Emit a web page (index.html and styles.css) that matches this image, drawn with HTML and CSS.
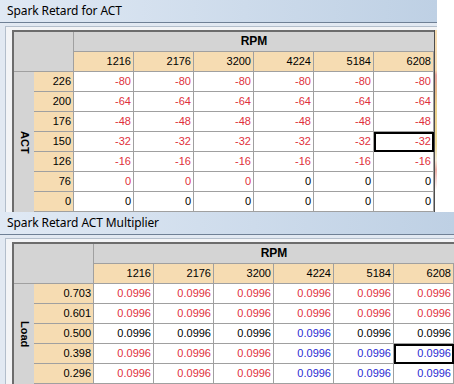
FILE: index.html
```html
<!DOCTYPE html>
<html>
<head>
<meta charset="utf-8">
<link rel="stylesheet" href="styles.css">
</head>
<body>
<div class="win win-top">
  <div class="titlebar">Spark Retard for ACT</div>
  <div class="frame">
    <div class="client">
      <div class="table table-act">
        <div class="corner"></div>
        <div class="axis-x">RPM</div>
        <div class="axis-y"><span>ACT</span></div>
        <div class="colhdr">1216</div><div class="colhdr">2176</div><div class="colhdr">3200</div><div class="colhdr">4224</div><div class="colhdr">5184</div><div class="colhdr">6208</div>
        <div class="rowhdr">226</div><div class="cell r">-80</div><div class="cell r">-80</div><div class="cell r">-80</div><div class="cell r">-80</div><div class="cell r">-80</div><div class="cell r">-80</div>
        <div class="rowhdr">200</div><div class="cell r">-64</div><div class="cell r">-64</div><div class="cell r">-64</div><div class="cell r">-64</div><div class="cell r">-64</div><div class="cell r">-64</div>
        <div class="rowhdr">176</div><div class="cell r">-48</div><div class="cell r">-48</div><div class="cell r">-48</div><div class="cell r">-48</div><div class="cell r">-48</div><div class="cell r">-48</div>
        <div class="rowhdr">150</div><div class="cell r">-32</div><div class="cell r">-32</div><div class="cell r">-32</div><div class="cell r">-32</div><div class="cell r">-32</div><div class="cell r sel">-32</div>
        <div class="rowhdr">126</div><div class="cell r">-16</div><div class="cell r">-16</div><div class="cell r">-16</div><div class="cell r">-16</div><div class="cell r">-16</div><div class="cell r">-16</div>
        <div class="rowhdr">76</div><div class="cell r">0</div><div class="cell r">0</div><div class="cell r">0</div><div class="cell k">0</div><div class="cell k">0</div><div class="cell k">0</div>
        <div class="rowhdr">0</div><div class="cell k">0</div><div class="cell k">0</div><div class="cell k">0</div><div class="cell k">0</div><div class="cell k">0</div><div class="cell k">0</div>
      </div>
      <div class="edge"></div>
    </div>
  </div>
</div>
<div class="win win-bottom">
  <div class="titlebar">Spark Retard ACT Multiplier</div>
  <div class="frame">
    <div class="client">
      <div class="table table-mult">
        <div class="corner"></div>
        <div class="axis-x">RPM</div>
        <div class="axis-y"><span>Load</span></div>
        <div class="colhdr">1216</div><div class="colhdr">2176</div><div class="colhdr">3200</div><div class="colhdr">4224</div><div class="colhdr">5184</div><div class="colhdr">6208</div>
        <div class="rowhdr">0.703</div><div class="cell r">0.0996</div><div class="cell r">0.0996</div><div class="cell r">0.0996</div><div class="cell r">0.0996</div><div class="cell r">0.0996</div><div class="cell r">0.0996</div>
        <div class="rowhdr">0.601</div><div class="cell r">0.0996</div><div class="cell r">0.0996</div><div class="cell r">0.0996</div><div class="cell r">0.0996</div><div class="cell r">0.0996</div><div class="cell r">0.0996</div>
        <div class="rowhdr">0.500</div><div class="cell k">0.0996</div><div class="cell k">0.0996</div><div class="cell k">0.0996</div><div class="cell b">0.0996</div><div class="cell k">0.0996</div><div class="cell k">0.0996</div>
        <div class="rowhdr">0.398</div><div class="cell r">0.0996</div><div class="cell r">0.0996</div><div class="cell r">0.0996</div><div class="cell b">0.0996</div><div class="cell b">0.0996</div><div class="cell b sel">0.0996</div>
        <div class="rowhdr">0.296</div><div class="cell r">0.0996</div><div class="cell r">0.0996</div><div class="cell r">0.0996</div><div class="cell b">0.0996</div><div class="cell b">0.0996</div><div class="cell b">0.0996</div>
      </div>
    </div>
  </div>
</div>
</body>
</html>
```
FILE: styles.css
```css
body {
  margin: 0;
  width: 454px;
  height: 384px;
  overflow: hidden;
  background: #ffffff;
  font-family: "Liberation Sans", Arial, sans-serif;
}

.win {
  background: #e2e9f2;
  overflow: hidden;
}

.win-top {
  width: 437px;
  height: 212px;
}

.win-bottom {
  width: 454px;
  height: 172px;
}

.titlebar {
  height: 22px;
  line-height: 22px;
  padding-left: 7px;
  border-bottom: 1px solid #6f8095;
  background: linear-gradient(to right, #e0e9f4, #bed0e4);
  font-family: "Noto Sans", sans-serif;
  font-size: 12px;
  letter-spacing: -0.1px;
  color: #000;
  white-space: nowrap;
}

.frame {
  padding: 3px 0 0 5px;
}

.client {
  display: flex;
  border-top: 1px solid #b3becb;
  border-left: 1px solid #b3becb;
  background: #f3f4f6;
  padding: 3px 0 0 6px;
}

.table {
  display: grid;
  border-top: 2px solid #6c6c6c;
  border-left: 2px solid #6c6c6c;
  font-size: 11px;
  flex: none;
}

.table-act {
  grid-template-columns: 20px 40px repeat(6, 60px);
  grid-template-rows: repeat(9, 20px);
}

.table-mult {
  grid-template-columns: 20px 60px repeat(6, 60px);
  grid-template-rows: repeat(7, 20px);
}

.table > div {
  box-sizing: border-box;
  line-height: 19px;
  white-space: nowrap;
}

.corner {
  grid-column: 1 / 3;
  grid-row: 1 / 3;
  background: #d4d4d4;
  border-right: 1px solid #a0a0a0;
  border-bottom: 1px solid #a0a0a0;
}

.axis-x {
  grid-column: 3 / -1;
  grid-row: 1;
  background: #d4d4d4;
  border-bottom: 1px solid #a0a0a0;
  text-align: center;
  font-weight: bold;
  font-size: 12px;
}

.axis-y {
  grid-column: 1;
  grid-row: 3 / -1;
  background: #d4d4d4;
  display: flex;
  align-items: center;
  justify-content: center;
}

.axis-y span {
  writing-mode: vertical-rl;
  font-weight: bold;
  font-size: 11px;
  line-height: 1;
}

.colhdr,
.rowhdr {
  background: #f6dcb2;
  border-right: 1px solid #a0a0a0;
  border-bottom: 1px solid #a0a0a0;
  text-align: right;
  padding-right: 2px;
  color: #000;
}

.cell {
  background: #ffffff;
  border-right: 1px solid #a0a0a0;
  border-bottom: 1px solid #a0a0a0;
  text-align: right;
  padding-right: 2px;
}

.r { color: #e0303c; }
.b { color: #2a2ad2; }
.k { color: #000000; }

.sel {
  outline: 2px solid #000;
  outline-offset: -2px;
}

.edge {
  width: 2px;
  flex: none;
  border-left: 1px solid #4d4d4d;
  background: linear-gradient(to bottom, #f6dcb2 0, #f6dcb2 40px, #e7a59e 45px, #e6b88a 60px, #ecd08a 75px, #efdb9a 115px, #f5ecd8 130px, #ecb0a8 140px, #fff 160px);
}
```
